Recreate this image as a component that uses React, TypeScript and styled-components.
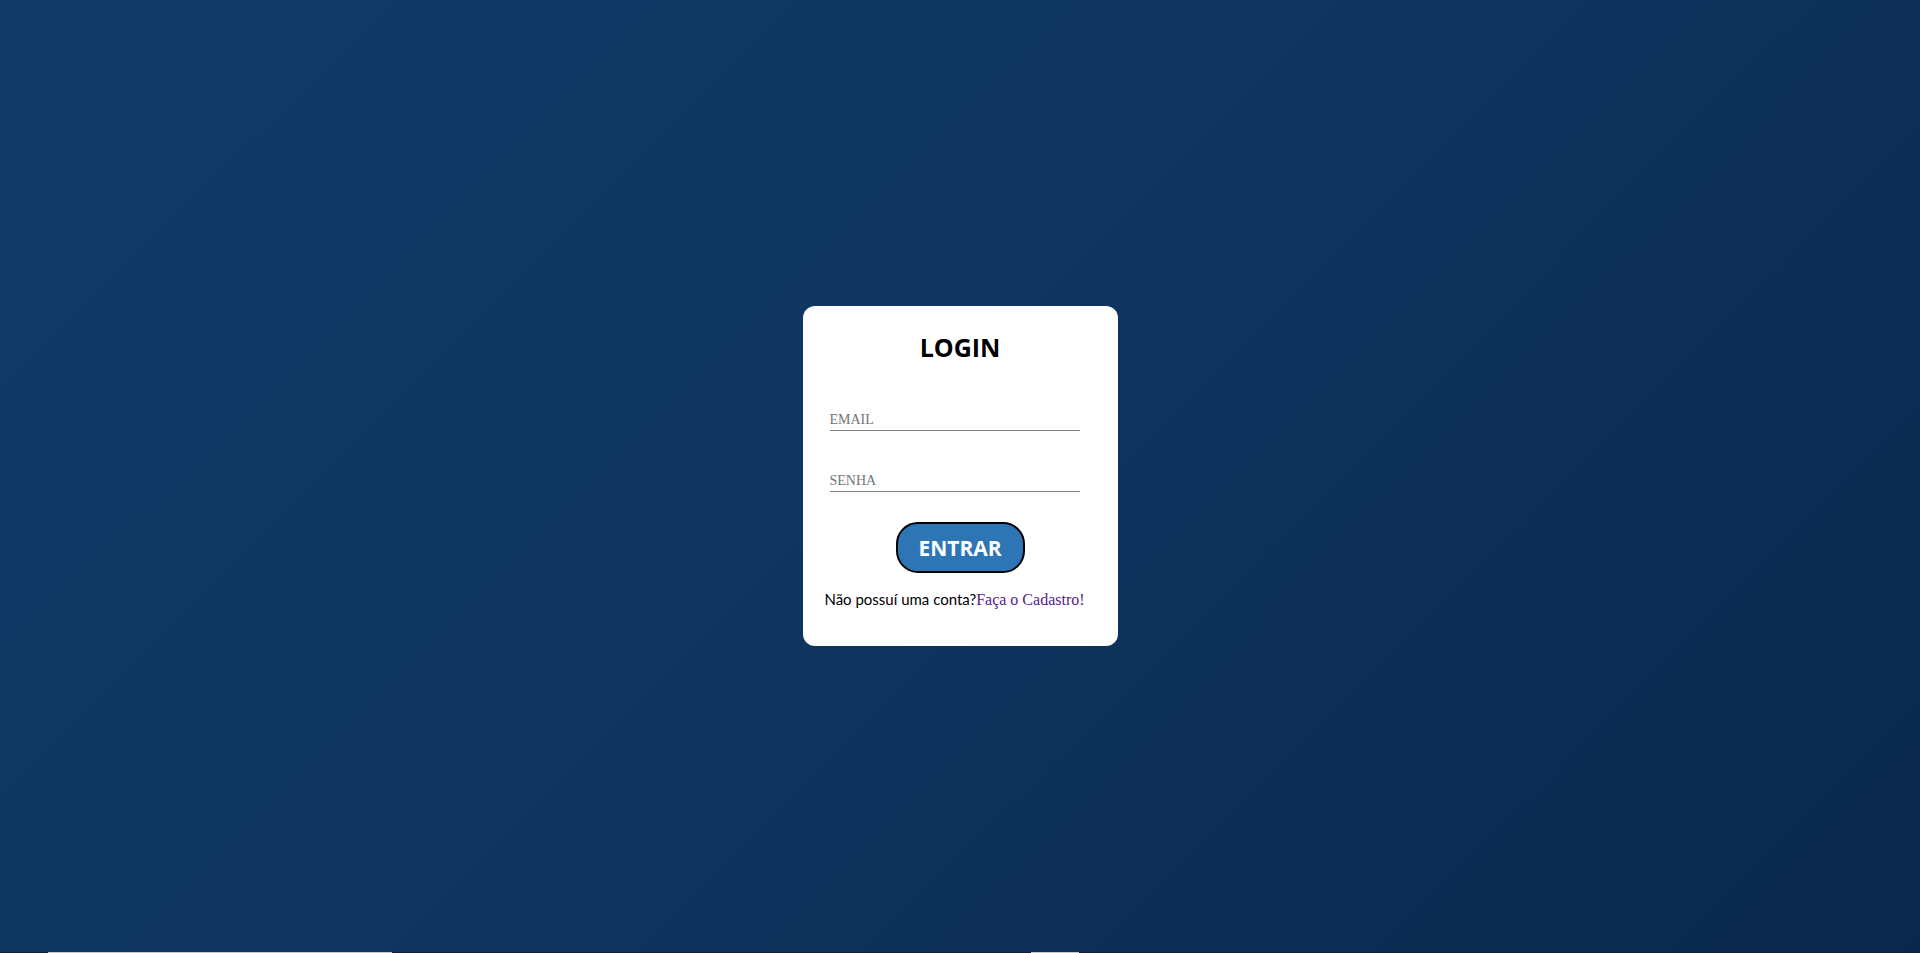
import React from "react";
import styled, { createGlobalStyle } from "styled-components";

const Global = createGlobalStyle`
  html, body { margin: 0; padding: 0; overflow: hidden; }
  body { font-family: "Liberation Serif", serif; }
  * { box-sizing: border-box; }
`;

const Page = styled.main`
  height: 952px;
  display: flex;
  align-items: center;
  justify-content: center;
  background: linear-gradient(135deg, #113b68 0%, #0f3560 45%, #0a284c 100%);
`;

const Card = styled.form`
  width: 315px;
  height: 340px;
  background: #ffffff;
  border-radius: 12px;
  display: flex;
  flex-direction: column;
  align-items: center;
  padding: 25px 0 0;
`;

const Title = styled.h1`
  margin: 0;
  font-family: "Open Sans", sans-serif;
  font-weight: 700;
  font-size: 25px;
  line-height: 33px;
  color: #000;
`;

const Field = styled.input<{ $top: number }>`
  align-self: flex-start;
  margin-left: 27px;
  width: 250px;
  height: 21px;
  padding: 1px 0;
  border: none;
  border-bottom: 1px solid #808080;
  outline: none;
  background: transparent;
  font-family: "Liberation Serif", serif;
  font-size: 14px;
  color: #000;
  margin-top: ${(p) => p.$top}px;
  &::placeholder { color: #757575; }
`;

const Button = styled.button`
  margin-top: 30px;
  width: 129px;
  height: 51px;
  border: 2px solid #000;
  border-radius: 22px;
  background: #2e75b6;
  color: #fff;
  font-family: "Open Sans", sans-serif;
  font-weight: 700;
  font-size: 21px;
  cursor: pointer;
`;

const Footnote = styled.p`
  margin: 17px 11px 0 0;
  font-family: "Lato", sans-serif;
  font-size: 15px;
  color: #000;
  white-space: nowrap;
`;

const SignupLink = styled.a`
  font-family: "Liberation Serif", serif;
  font-size: 16px;
  color: #551a8b;
  text-decoration: none;
`;

const Footer = styled.footer`
  height: 40px;
  background: #171b2b;
  display: flex;
  align-items: flex-start;
  padding-left: 48px;
`;

const FooterBlock = styled.div<{ $w: number; $ml: number }>`
  width: ${(p) => p.$w}px;
  height: 30px;
  margin-left: ${(p) => p.$ml}px;
  background: #c9c9cc;
`;

export default function App() {
  return (
    <>
      <Global />
      <Page>
        <Card onSubmit={(e) => e.preventDefault()}>
          <Title>LOGIN</Title>
          <Field $top={46} type="email" placeholder="EMAIL" />
          <Field $top={40} type="password" placeholder="SENHA" />
          <Button type="submit">ENTRAR</Button>
          <Footnote>
            Não possuí uma conta?<SignupLink href="#">Faça o Cadastro!</SignupLink>
          </Footnote>
        </Card>
      </Page>
      <Footer>
        <FooterBlock $w={344} $ml={0} />
        <FooterBlock $w={48} $ml={639} />
      </Footer>
    </>
  );
}
